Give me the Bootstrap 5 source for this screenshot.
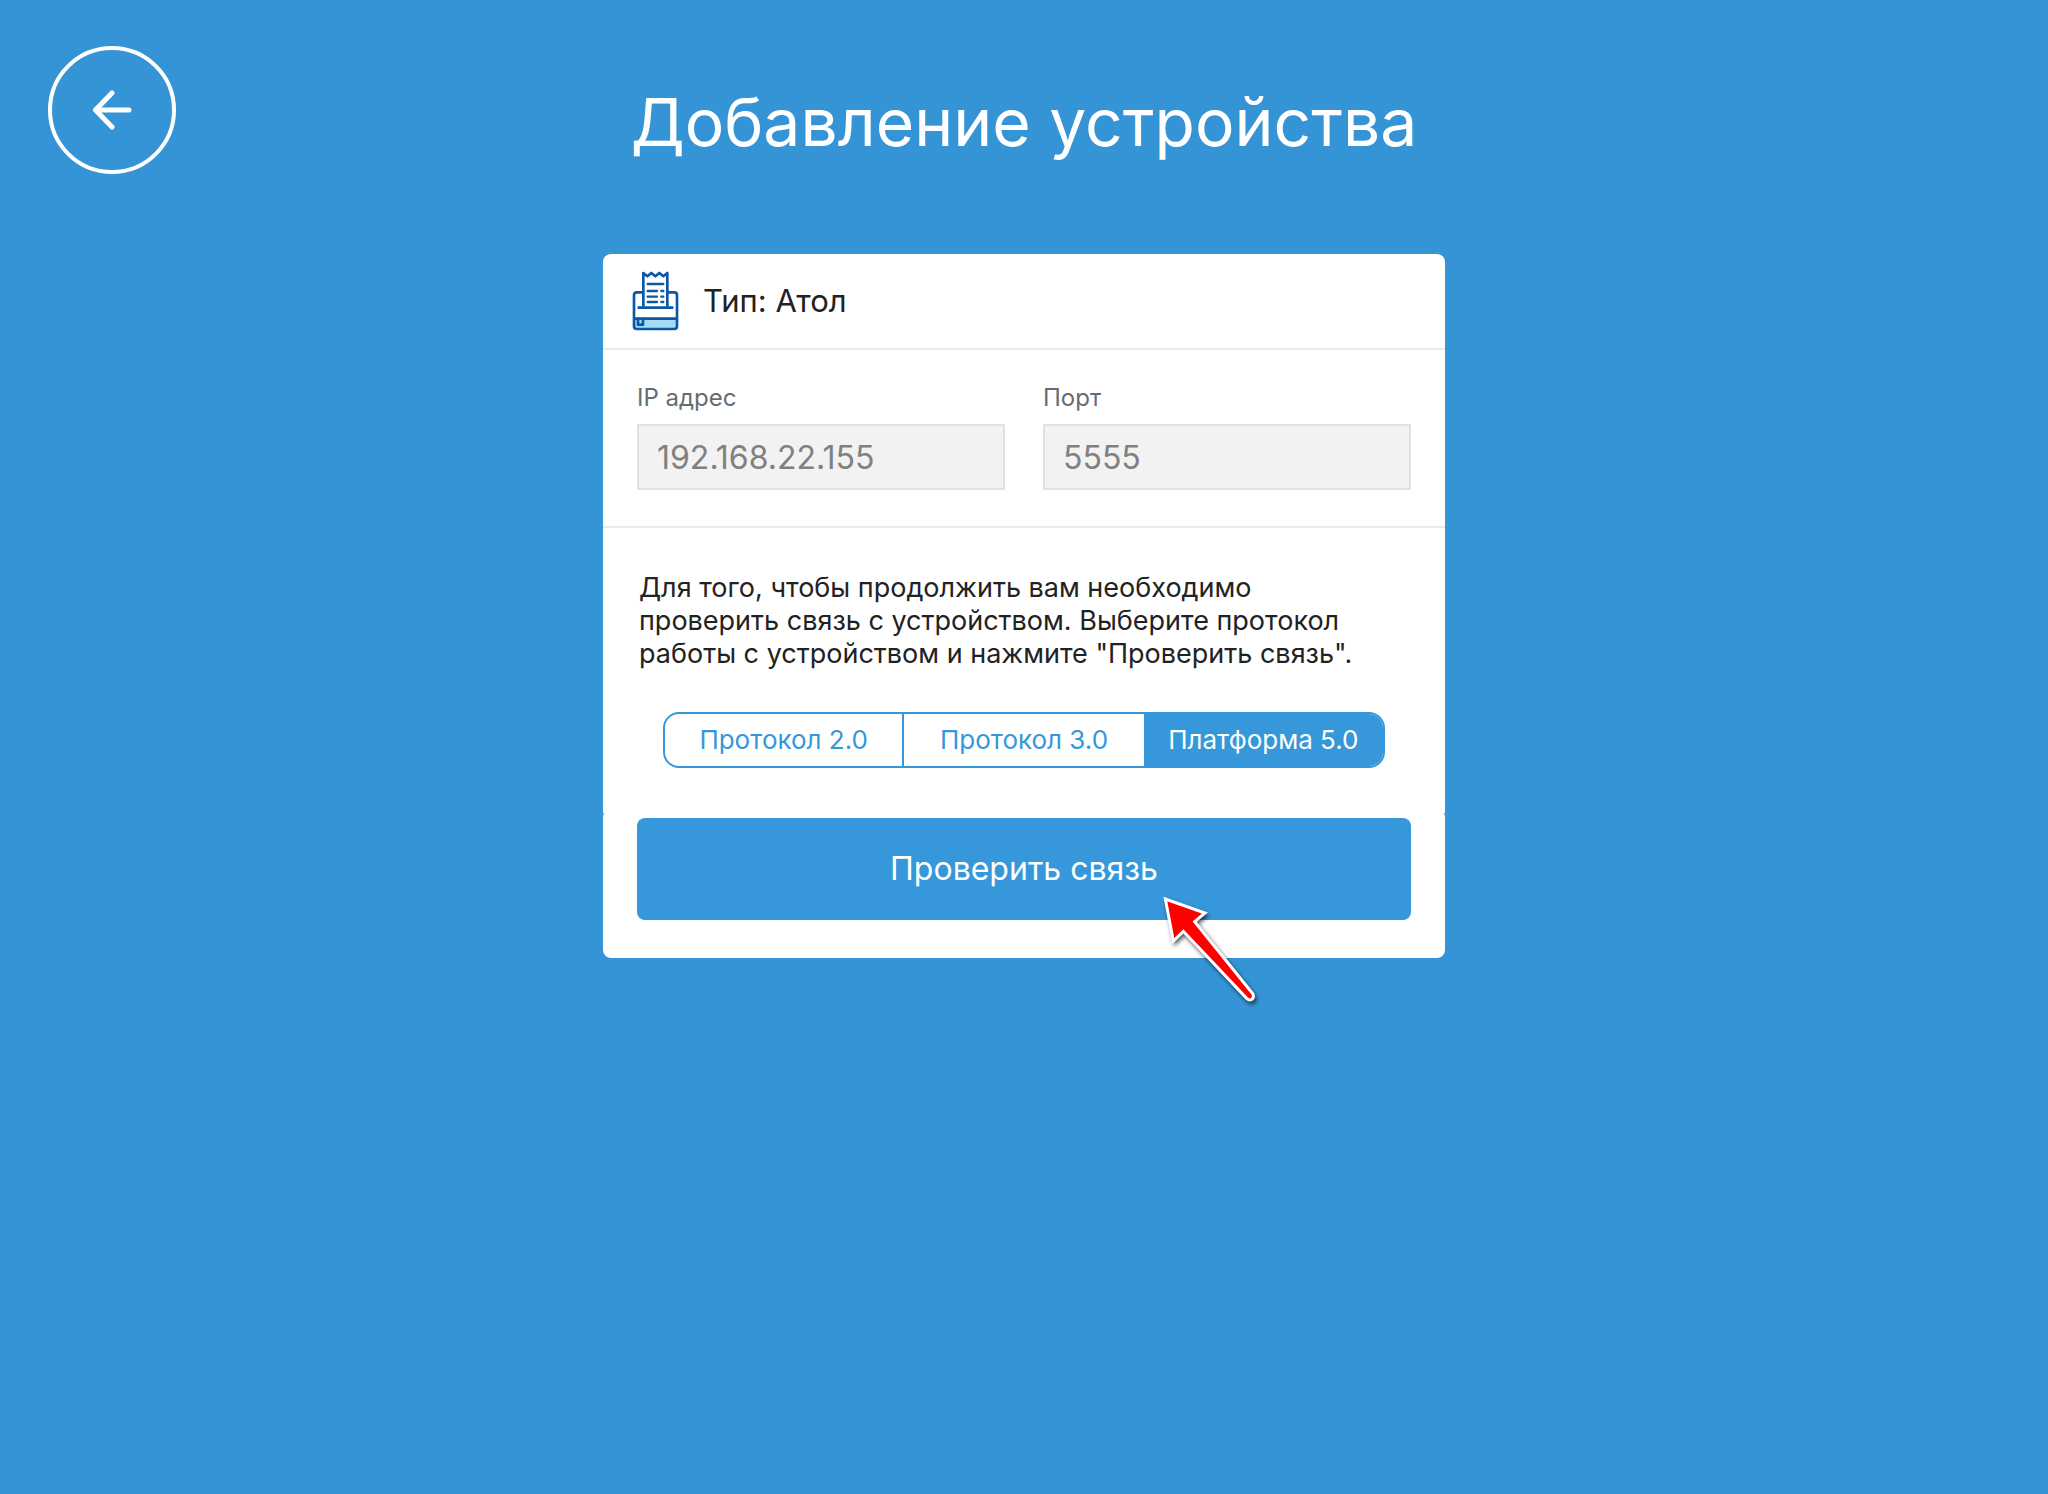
<!DOCTYPE html>
<html lang="ru">
<head>
<meta charset="utf-8">
<meta name="viewport" content="width=device-width, initial-scale=1">
<title>Добавление устройства</title>
<link href="https://cdn.jsdelivr.net/npm/bootstrap@5.3.0/dist/css/bootstrap.min.css" rel="stylesheet">
<style>
  :root { --brand: #3594d5; --brand-btn: #3697da; --line: #e6edf1; }
  body { background: var(--brand); color: #222; font-family: Inter, "Noto Sans", sans-serif; }
  .topbar { display: grid; grid-template-columns: 1fr auto 1fr; padding: 46px 48px 0; margin-bottom: 80px; }
  .back-btn { width: 128px; height: 128px; border: 4px solid #fff; }
  .page-title { font-size: 66px; line-height: 84px; margin: 34px 0 0; font-weight: 400; }
  .device { max-width: 842px; }
  .panel { background: #fff; border-radius: 8px 8px 2px 2px; }
  .panel-foot { background: #fff; border-radius: 2px 2px 8px 8px; padding: 4px 34px 38px; }
  .type-row { height: 96px; padding: 0 28px; gap: 24px; border-bottom: 2px solid var(--line); font-size: 31px; line-height: 40px; }
  .fields { padding: 32px 34px 36px; gap: 38px; border-bottom: 2px solid var(--line); }
  .fields label { font-size: 24px; line-height: 32px; margin-bottom: 10px; color: #636e74; }
  .fields .form-control { height: 66px; padding: 0 18px; border: 2px solid #e1e1e1; border-radius: 0; background: #f2f2f2; color: #808080; font-size: 32px; }
  .protocol { padding: 43px 36px 46px; }
  .protocol p { font-size: 27px; line-height: 33px; margin-bottom: 42px; }
  .segments { margin: 0 24px; height: 56px; border: 2px solid var(--brand-btn); border-radius: 16px; overflow: hidden; }
  .segments .btn { width: 33.3333%; border: 0; border-radius: 0; padding: 0; font-size: 26px; line-height: 52px; color: var(--brand-btn); }
  .segments .btn:first-of-type { border-right: 2px solid var(--brand-btn); }
  .segments .btn-check:checked + .btn { background: var(--brand-btn); color: #fff; }
  .check-btn { height: 102px; border: 0; border-radius: 8px; background: var(--brand-btn); color: #fff; font-size: 32px; }
  .pointer { right: 179px; top: 78px; pointer-events: none; }
</style>
<script src="https://cdn.jsdelivr.net/npm/bootstrap@5.3.0/dist/js/bootstrap.bundle.min.js"></script>
</head>
<body class="min-vh-100">
<header class="topbar">
  <button type="button" class="back-btn btn rounded-circle p-0 d-flex align-items-center justify-content-center" aria-label="Назад">
    <svg width="40" height="40" viewBox="0 0 40 40" fill="none" stroke="#fff" stroke-width="5" stroke-linecap="round" stroke-linejoin="round" aria-hidden="true"><path d="M20 3 3.500 20 20 37M3.500 20H37"/></svg>
  </button>
  <h1 class="page-title text-white text-center">Добавление устройства</h1>
</header>

<main class="device mx-auto">
  <section class="panel">
    <div class="type-row d-flex align-items-center">
      <svg width="48" height="60" viewBox="108 78 144 180" fill="none" stroke="#0c58a8" stroke-width="8" stroke-linejoin="round" stroke-linecap="round" aria-hidden="true">
        <path d="M117 220h129v25q0 7-7 7H124q-7 0-7-7z" fill="#a6dbf8" stroke="none"/>
        <path d="M143 142h-18q-8 0-8 9v93q0 8 8 8h113q8 0 8-8v-93q0-9-8-9h-18M117 221h129M131 188h101"/>
        <path d="M145 187V84l12 10 12-10 12 10 12-10 12 10 12-10v103"/>
        <path stroke-width="7" d="M158 117h47M158 138h28M158 155h28M158 171h28M199 138h6M199 155h6M199 171h6"/>
        <path d="M129 221v18h15v-18"/>
      </svg>
      <span>Тип: Атол</span>
    </div>
    <div class="fields d-flex">
      <div class="flex-fill">
        <label for="ip" class="d-block">IP адрес</label>
        <input id="ip" type="text" class="form-control" value="192.168.22.155" disabled>
      </div>
      <div class="flex-fill">
        <label for="port" class="d-block">Порт</label>
        <input id="port" type="text" class="form-control" value="5555" disabled>
      </div>
    </div>
    <div class="protocol">
      <p>Для того, чтобы продолжить вам необходимо<br>проверить связь с устройством. Выберите протокол<br>работы с устройством и нажмите "Проверить связь".</p>
      <div class="segments d-flex" role="group" aria-label="Протокол">
        <input type="radio" class="btn-check" name="protocol" id="p2">
        <label class="btn" for="p2">Протокол 2.0</label>
        <input type="radio" class="btn-check" name="protocol" id="p3">
        <label class="btn" for="p3">Протокол 3.0</label>
        <input type="radio" class="btn-check" name="protocol" id="p5" checked>
        <label class="btn" for="p5">Платформа 5.0</label>
      </div>
    </div>
  </section>
  <section class="panel-foot position-relative">
    <button type="button" class="check-btn btn w-100">Проверить связь</button>
    <svg class="pointer position-absolute" width="110" height="120" viewBox="288 338 330 360" aria-hidden="true">
      <defs><filter id="soft" x="-20%" y="-20%" width="140%" height="140%"><feGaussianBlur stdDeviation="7"/></filter></defs>
      <path d="M316 359 435 401 404 427 579 644Q583 653 576 660 568 665 560 657L370 456 340 485Z" transform="translate(5 8)" fill="#000" stroke="#000" stroke-width="8" opacity=".65" filter="url(#soft)"/>
      <path d="M316 359 435 401 404 427 579 644Q583 653 576 660 568 665 560 657L370 456 340 485Z" fill="#f00" stroke="#fff" stroke-width="9"/>
    </svg>
  </section>
</main>
</body>
</html>
